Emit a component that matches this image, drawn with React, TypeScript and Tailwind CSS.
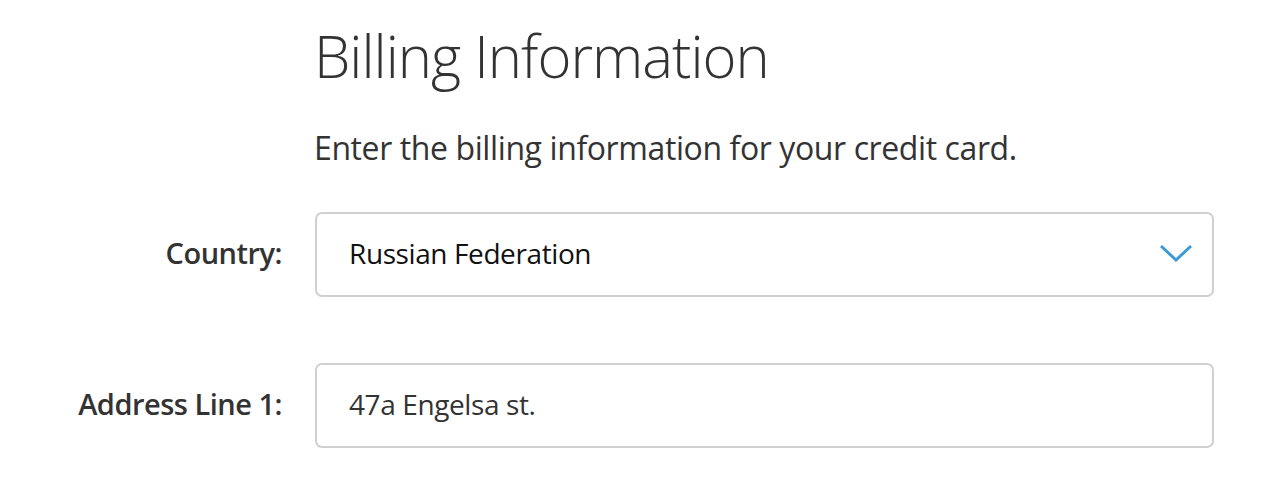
import React from "react";

export default function App() {
  return (
    <div className="w-[1264px] h-[484px] bg-white overflow-hidden text-[#333]" style={{ fontFamily: '"Open Sans", "Noto Sans", sans-serif' }}>
      <div className="pl-[314px] pt-[16px]">
        <h1 className="text-[58px] font-light leading-[80px] text-[#333] tracking-[-1px]">Billing Information</h1>
        <p className="mt-[30px] text-[32px] leading-[44px] text-[#333] tracking-[-0.4px]">Enter the billing information for your credit card.</p>
      </div>
      <div className="mt-[42px] flex flex-col gap-[66px]">
        <div className="flex items-center">
          <label className="w-[282px] text-right text-[29px] font-semibold text-[#333] tracking-[-0.5px] pb-[4px]">Country:</label>
          <div className="ml-[33px] w-[899px] h-[85px] border-2 border-[#d0d0d0] rounded-[7px] flex items-center justify-between pl-[32px] pr-[19px] pb-[4px]">
            <span className="text-[28px] text-[#111] tracking-[-0.4px]">Russian Federation</span>
            <svg width="34" height="20" viewBox="0 0 34 20" fill="none">
              <path d="M2 3 L17 17 L32 3" stroke="#3d9ad8" strokeWidth="3" />
            </svg>
          </div>
        </div>
        <div className="flex items-center">
          <label className="w-[282px] text-right text-[29px] font-semibold text-[#333] tracking-[-0.5px] pb-[4px]">Address Line 1:</label>
          <div className="ml-[33px] w-[899px] h-[85px] border-2 border-[#d0d0d0] rounded-[7px] flex items-center pl-[32px] pb-[4px]">
            <span className="text-[28px] text-[#333] tracking-[-0.4px]">47a Engelsa st.</span>
          </div>
        </div>
      </div>
    </div>
  );
}
